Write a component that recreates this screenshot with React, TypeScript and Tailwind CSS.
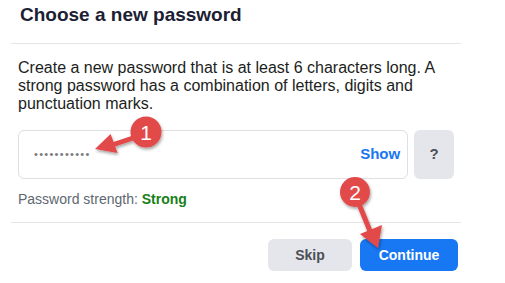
import React from 'react';

const Annotations: React.FC = () => (
  <svg className="pointer-events-none absolute left-0 top-0" width={505} height={283} viewBox="0 0 505 283">
    <defs>
      <filter id="shadow" x="-20%" y="-20%" width="140%" height="140%">
        <feDropShadow dx="1" dy="2" stdDeviation="1.5" floodColor="#000" floodOpacity="0.35" />
      </filter>
    </defs>
    <g filter="url(#shadow)" fill="#e2494a" stroke="none">
      {/* arrow 1 */}
      <line x1="136" y1="137" x2="112" y2="145" stroke="#e2494a" strokeWidth="5" />
      <polygon points="95,149 110.6,134 117.6,153" />
      {/* arrow 2 */}
      <line x1="359" y1="204" x2="370" y2="231" stroke="#e2494a" strokeWidth="5" />
      <polygon points="378,248 360,234 382,225" />
      <circle cx="146" cy="132" r="15.5" />
      <circle cx="355" cy="192" r="15" />
    </g>
    <text x="146" y="139.5" textAnchor="middle" fill="#fff" fontSize="21" fontFamily="'Liberation Sans', Arial, sans-serif">1</text>
    <text x="355" y="199.5" textAnchor="middle" fill="#fff" fontSize="21" fontFamily="'Liberation Sans', Arial, sans-serif">2</text>
  </svg>
);

export default function App() {
  return (
    <div className="relative h-[283px] w-[505px] overflow-hidden bg-white font-['Liberation_Sans',Arial,sans-serif] text-[#1c1e21]">
      <div className="ml-[11px] w-[450px]">
        {/* HEADER */}
        <div className="border-b border-[#e5e5e5] pb-[16px] pl-[9px] pt-[3px]">
          <h1 className="text-[19px] font-bold leading-[24px] text-[#1c2033]">Choose a new password</h1>
        </div>

        {/* BODY */}
        <div className="border-b border-[#e5e5e5] px-[7px] pb-[14px] pt-[15px]">
          <p className="text-[16px] leading-[18px]">
            Create a new password that is at least 6 characters long. A strong password has a combination of letters, digits and punctuation marks.
          </p>
          <div className="mt-[17px] flex gap-[6px]">
            <div className="flex h-[49px] w-[392px] items-center justify-between rounded-md border border-[#dddfe2] bg-white pl-[15px] pr-[7px]">
              <span className="text-[11px] leading-none tracking-[1.3px] text-[#777a80]">•••••••••••</span>
              <span className="text-[15px] font-bold text-[#1877f2]">Show</span>
            </div>
            <div className="flex h-[49px] w-[40px] items-center justify-center rounded-md bg-[#e4e6eb] text-[15px] font-bold text-[#4b4f56]">?</div>
          </div>
          <p className="mt-[11px] text-[14px] leading-[18px] text-[#606770]">
            Password strength: <span className="font-bold text-[#178017]">Strong</span>
          </p>
        </div>

        {/* FOOTER */}
        <div className="flex justify-end gap-[8px] pr-[3px] pt-[16px]">
          <button className="h-[32px] w-[84px] rounded-md bg-[#e4e6eb] text-[14px] font-bold text-[#4b4f56]">Skip</button>
          <button className="h-[32px] w-[98px] rounded-md bg-[#1877f2] text-[14px] font-bold text-white">Continue</button>
        </div>
      </div>
      <Annotations />
    </div>
  );
}
